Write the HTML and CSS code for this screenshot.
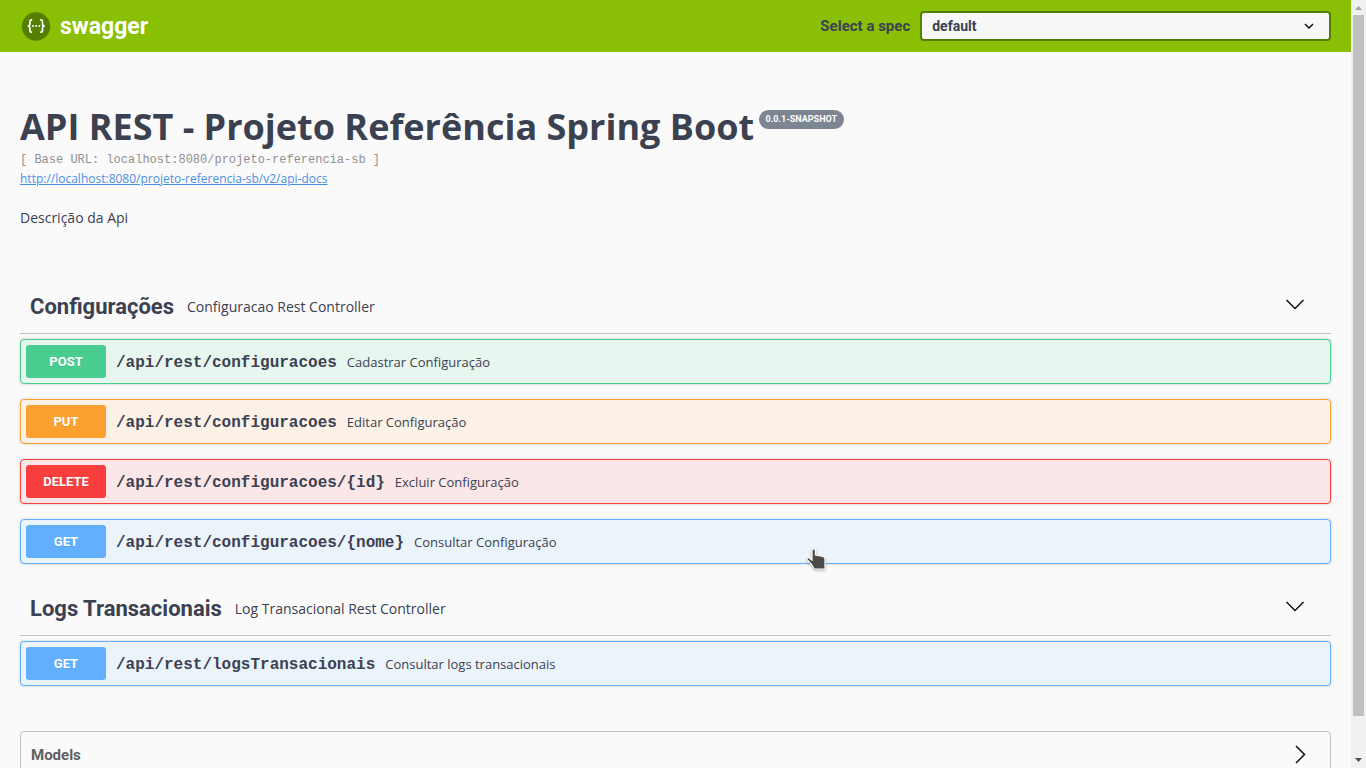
FILE: index.html
```html
<!DOCTYPE html>
<html lang="pt-BR">
<head>
<meta charset="utf-8">
<meta name="viewport" content="width=device-width, initial-scale=1">
<title>Swagger UI</title>
<link rel="stylesheet" href="styles.css">
</head>
<body>
<div class="page">
  <header class="topbar">
    <a class="brand" href="#">
      <svg class="brand-mark" viewBox="0 0 30 30" aria-hidden="true">
        <circle cx="15" cy="15.500" r="14.200" fill="#547f00"/>
        <g fill="none" stroke="#fff" stroke-width="1.700">
          <path d="M11.200 8.800H10.400Q8.900 8.800 8.900 10.500V12.900Q8.900 15 6.600 15Q8.900 15 8.900 17.100V19.500Q8.900 21.200 10.400 21.200H11.200"/>
          <path d="M19.200 8.800H20Q21.500 8.800 21.500 10.500V12.900Q21.500 15 23.800 15Q21.500 15 21.500 17.100V19.500Q21.500 21.200 20 21.200H19.200"/>
        </g>
        <g fill="#fff"><circle cx="12" cy="15" r="1"/><circle cx="15.200" cy="15" r="1"/><circle cx="18.400" cy="15" r="1"/></g>
      </svg>
      <span>swagger</span>
    </a>
    <div class="spec">
      <label for="spec">Select a spec</label>
      <div class="select-wrap">
        <select id="spec"><option>default</option></select>
        <svg class="select-arrow" viewBox="0 0 10 6" aria-hidden="true"><path d="M1 1L5 5L9 1" fill="none" stroke="#111" stroke-width="1.500"/></svg>
      </div>
    </div>
  </header>
  <main class="content">
    <section class="info">
      <h1 class="title">API REST - Projeto Referência Spring Boot <span class="version">0.0.1-SNAPSHOT</span></h1>
      <p class="base-url">[ Base URL: localhost:8080/projeto-referencia-sb ]</p>
      <a class="docs-link" href="#">http://localhost:8080/projeto-referencia-sb/v2/api-docs</a>
      <p class="description">Descrição da Api</p>
    </section>
    <div class="tags">
      <section class="tag">
        <div class="tag-head">
          <h2>Configurações</h2>
          <p>Configuracao Rest Controller</p>
          <button class="toggle" type="button" aria-label="Recolher Configurações"><svg viewBox="0 0 20 20"><path d="M1.500 4L10 12.500L18.500 4" /></svg></button>
        </div>
        <div class="operations">
          <div class="op post"><button class="method" type="button">POST</button><span class="path">/api/rest/configuracoes</span><span class="summary">Cadastrar Configuração</span></div>
          <div class="op put"><button class="method" type="button">PUT</button><span class="path">/api/rest/configuracoes</span><span class="summary">Editar Configuração</span></div>
          <div class="op delete"><button class="method" type="button">DELETE</button><span class="path">/api/rest/configuracoes/{id}</span><span class="summary">Excluir Configuração</span></div>
          <div class="op get"><button class="method" type="button">GET</button><span class="path">/api/rest/configuracoes/{nome}</span><span class="summary">Consultar Configuração</span></div>
        </div>
      </section>
      <section class="tag">
        <div class="tag-head">
          <h2>Logs Transacionais</h2>
          <p>Log Transacional Rest Controller</p>
          <button class="toggle" type="button" aria-label="Recolher Logs Transacionais"><svg viewBox="0 0 20 20"><path d="M1.500 4L10 12.500L18.500 4" /></svg></button>
        </div>
        <div class="operations">
          <div class="op get"><button class="method" type="button">GET</button><span class="path">/api/rest/logsTransacionais</span><span class="summary">Consultar logs transacionais</span></div>
        </div>
      </section>
    </div>
    <section class="models">
      <h2>Models</h2>
      <button class="toggle" type="button" aria-label="Expandir Models"><svg viewBox="0 0 20 20"><path d="M6 1L14.500 9.500L6 18" /></svg></button>
    </section>
  </main>
</div>
<div class="scrollbar" aria-hidden="true">
  <svg class="scroll-arrow" viewBox="0 0 15 15"><path d="M4 10L7.500 6L11 10Z" fill="#a3a3a3"/></svg>
  <div class="track"><div class="thumb"></div></div>
  <svg class="scroll-arrow" viewBox="0 0 15 15"><path d="M4 5L7.500 9L11 5Z" fill="#505050"/></svg>
</div>
<svg class="pointer" viewBox="0 0 20 22" aria-hidden="true"><path d="M7.500 1Q9.500 1 9.500 3V7L17 8.500Q19 9 19 11V21H8L6 17L1 11.500Q0.500 9.500 2.500 9.500L6 12V2.500Q6 1 7.500 1Z" fill="#4a4a4a" stroke="#fff" stroke-width="1.200"/></svg>
</body>
</html>
```

FILE: styles.css
```css
* { box-sizing: border-box; }

body {
  margin: 0;
  display: flex;
  height: 100vh;
  overflow: hidden;
  background: #fafafa;
  color: #3b4151;
  font-family: "Open Sans", sans-serif;
}

h1, h2, p { margin: 0; }
button, select { font-family: inherit; cursor: pointer; }

.page {
  flex: 1;
  min-width: 0;
  overflow-y: auto;
  scrollbar-width: none;
}

/* Top bar */
.topbar {
  display: flex;
  align-items: center;
  justify-content: space-between;
  height: 52px;
  padding: 0 20px 0 21px;
  background: #89bf04;
  font-family: Roboto, sans-serif;
  font-weight: 700;
}
.brand {
  display: flex;
  align-items: center;
  gap: 9px;
  color: #fff;
  font-size: 23px;
  text-decoration: none;
}
.brand-mark { width: 30px; height: 30px; }
.spec {
  display: flex;
  align-items: center;
  gap: 10px;
  font-size: 15px;
}
.select-wrap { position: relative; width: calc(30vw + 1px); }
.spec select {
  display: block;
  width: 100%;
  height: 30px;
  padding: 0 10px;
  border: 2px solid #547f00;
  border-radius: 4px;
  background: #f7f7f7;
  color: #3b4151;
  font-size: 14px;
  font-weight: 700;
  appearance: none;
}
.select-arrow {
  position: absolute;
  right: 17px;
  top: 12px;
  width: 10px;
  height: 6px;
  pointer-events: none;
}

/* API information */
.content { padding: 50px 20px; }
.info { margin-bottom: 50px; }
.title {
  font-size: 36px;
  line-height: 49px;
}
.version {
  display: inline-block;
  margin-left: -5px;
  padding: 0 7px;
  border-radius: 10px;
  background: #7d8492;
  color: #fff;
  font-family: Roboto, sans-serif;
  font-size: 9px;
  line-height: 19px;
  vertical-align: 18px;
}
.base-url {
  color: #909090;
  font-family: "Liberation Mono", monospace;
  font-size: 12px;
  line-height: 18px;
}
.docs-link {
  display: block;
  color: #4990e2;
  font-size: 12px;
  line-height: 20px;
}
.description {
  margin-top: 18px;
  font-size: 14px;
  line-height: 22px;
}

/* Operation groups */
.tags { display: grid; gap: 17px; }
.tag-head {
  display: flex;
  align-items: center;
  gap: 13px;
  height: 55px;
  margin-bottom: 5px;
  padding: 0 26px 0 10px;
  border-bottom: 1px solid #bfc1c6;
}
.tag-head h2 {
  font-family: Roboto, sans-serif;
  font-size: 22px;
}
.tag-head p { font-size: 14px; }
.toggle {
  display: flex;
  margin-left: auto;
  padding: 0;
  border: 0;
  background: none;
}
.toggle svg {
  width: 20px;
  height: 20px;
  fill: none;
  stroke: #111;
  stroke-width: 1.5;
}
.operations { display: grid; gap: 15px; }
.op {
  --tone: #61affe;
  --tint: #ebf3fb;
  display: flex;
  align-items: center;
  padding: 5px;
  border: 1px solid var(--tone);
  border-radius: 4px;
  background: var(--tint);
  box-shadow: 0 0 3px rgba(0, 0, 0, 0.19);
}
.post { --tone: #49cc90; --tint: #e8f6f0; }
.put { --tone: #fca130; --tint: #fbf1e6; }
.delete { --tone: #f93e3e; --tint: #fbe7e7; }
.method {
  width: 80px;
  height: 33px;
  padding: 0;
  border: 0;
  border-radius: 3px;
  background: var(--tone);
  color: #fff;
  font-family: Roboto, sans-serif;
  font-size: 13px;
  font-weight: 700;
  text-shadow: 0 1px 0 rgba(0, 0, 0, 0.1);
}
.path {
  padding: 2px 10px 0;
  font-family: "Liberation Mono", monospace;
  font-size: 16px;
  font-weight: 700;
}
.summary { font-size: 13px; }

/* Models */
.models {
  display: flex;
  align-items: center;
  height: 48px;
  margin-top: 45px;
  padding: 0 20px 0 10px;
  border: 1px solid #bfc1c6;
  border-radius: 4px;
  color: #606060;
}
.models h2 {
  font-family: Roboto, sans-serif;
  font-size: 15px;
}

/* Scroll bar */
.scrollbar {
  display: flex;
  flex-direction: column;
  width: 15px;
  background: #f1f1f1;
}
.scroll-arrow { width: 15px; height: 15px; }
.track { flex: 1; padding: 0 2px; }
.thumb { height: 95%; background: #c1c1c1; }

/* Mouse pointer */
.pointer {
  position: absolute;
  left: 806px;
  top: 548px;
  width: 20px;
  height: 22px;
  filter: drop-shadow(0 1px 1px rgba(0, 0, 0, 0.3));
}
```
